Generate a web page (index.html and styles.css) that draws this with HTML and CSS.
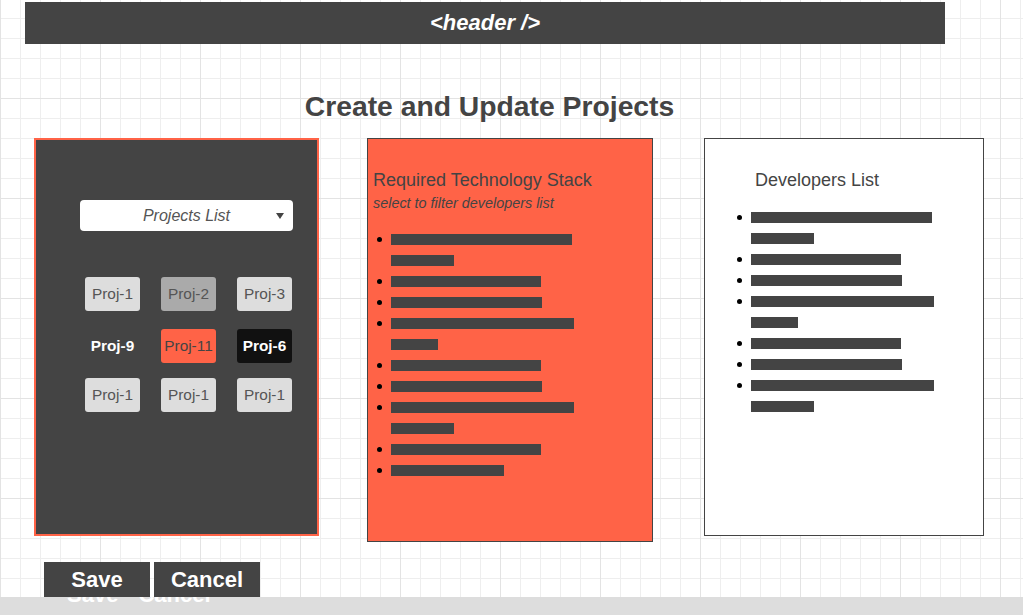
FILE: index.html
```html
<!DOCTYPE html>
<html>
<head>
<meta charset="utf-8">
<title>Create and Update Projects</title>
<link rel="stylesheet" href="styles.css">
</head>
<body>
  <header class="topbar">&lt;header /&gt;</header>
  <h1 class="page-title">Create and Update Projects</h1>

  <main class="panels">
    <section class="panel panel-projects">
      <div class="dropdown">
        <span class="dropdown-label">Projects List</span>
        <span class="dropdown-caret"></span>
      </div>
      <div class="proj-grid">
        <div class="proj-row">
          <button class="proj">Proj-1</button>
          <button class="proj proj-muted">Proj-2</button>
          <button class="proj">Proj-3</button>
        </div>
        <div class="proj-row proj-row-mid">
          <button class="proj proj-plain">Proj-9</button>
          <button class="proj proj-accent">Proj-11</button>
          <button class="proj proj-dark">Proj-6</button>
        </div>
        <div class="proj-row proj-row-last">
          <button class="proj">Proj-1</button>
          <button class="proj">Proj-1</button>
          <button class="proj">Proj-1</button>
        </div>
      </div>
    </section>

    <section class="panel panel-stack">
      <h2 class="panel-title">Required Technology Stack</h2>
      <p class="panel-sub">select to filter developers list</p>
      <ul class="bar-list">
        <li><div class="bars"><span class="bar" style="width:181px"></span><span class="bar" style="width:63px"></span></div></li>
        <li><div class="bars"><span class="bar" style="width:150px"></span></div></li>
        <li><div class="bars"><span class="bar" style="width:151px"></span></div></li>
        <li><div class="bars"><span class="bar" style="width:183px"></span><span class="bar" style="width:47px"></span></div></li>
        <li><div class="bars"><span class="bar" style="width:150px"></span></div></li>
        <li><div class="bars"><span class="bar" style="width:151px"></span></div></li>
        <li><div class="bars"><span class="bar" style="width:183px"></span><span class="bar" style="width:63px"></span></div></li>
        <li><div class="bars"><span class="bar" style="width:150px"></span></div></li>
        <li><div class="bars"><span class="bar" style="width:113px"></span></div></li>
      </ul>
    </section>

    <section class="panel panel-devs">
      <h2 class="panel-title">Developers List</h2>
      <ul class="bar-list">
        <li><div class="bars"><span class="bar" style="width:181px"></span><span class="bar" style="width:63px"></span></div></li>
        <li><div class="bars"><span class="bar" style="width:150px"></span></div></li>
        <li><div class="bars"><span class="bar" style="width:151px"></span></div></li>
        <li><div class="bars"><span class="bar" style="width:183px"></span><span class="bar" style="width:47px"></span></div></li>
        <li><div class="bars"><span class="bar" style="width:150px"></span></div></li>
        <li><div class="bars"><span class="bar" style="width:151px"></span></div></li>
        <li><div class="bars"><span class="bar" style="width:183px"></span><span class="bar" style="width:63px"></span></div></li>
      </ul>
    </section>
  </main>

  <div class="actions">
    <button class="action">Save</button>
    <button class="action">Cancel</button>
  </div>

  <footer class="bottom-bar">
    <div class="ghost"><span class="ghost-save">Save</span><span class="ghost-cancel">Cancel</span></div>
  </footer>
</body>
</html>
```

FILE: styles.css
```css
html {
  background-color: #ffffff;
  background-image:
    linear-gradient(to right, #e3e3e3 1px, transparent 1px),
    linear-gradient(to bottom, #e3e3e3 1px, transparent 1px),
    linear-gradient(to right, #eeeeee 1px, transparent 1px),
    linear-gradient(to bottom, #eeeeee 1px, transparent 1px);
  background-size: 100px 100px, 100px 100px, 20px 20px, 20px 20px;
  background-position: 0 -2px, 0 -2px, 0 -2px, 0 -2px;
}

body {
  margin: 0;
  font-family: "Liberation Sans", Arial, sans-serif;
  color: #444444;
  height: 615px;
  overflow: hidden;
}

.topbar {
  display: block;
  margin: 2px 0 0 25px;
  width: 920px;
  height: 42px;
  background: #444444;
  color: #ffffff;
  font-size: 22px;
  font-weight: bold;
  font-style: italic;
  line-height: 42px;
  text-align: center;
}

.page-title {
  margin: 46px 44px 16px 0;
  font-size: 28.3px;
  line-height: 32px;
  font-weight: bold;
  text-align: center;
  color: #444444;
}

.panels {
  display: flex;
  align-items: flex-start;
  padding-left: 34px;
}

.panel {
  box-sizing: border-box;
}

.panel-projects {
  width: 285px;
  height: 398px;
  background: #444444;
  border: 2px solid #ff6347;
  padding: 60px 0 0 44px;
}

.dropdown {
  position: relative;
  width: 213px;
  height: 31px;
  background: #ffffff;
  border-radius: 4px;
  text-align: center;
}

.dropdown-label {
  font-size: 16px;
  font-style: italic;
  line-height: 31px;
  color: #555555;
}

.dropdown-caret {
  position: absolute;
  right: 9px;
  top: 13px;
  width: 0;
  height: 0;
  border-left: 4px solid transparent;
  border-right: 4px solid transparent;
  border-top: 6px solid #444444;
}

.proj-grid {
  margin: 46px 0 0 5px;
}

.proj-row {
  display: flex;
  gap: 21px;
}

.proj-row-mid {
  margin-top: 18px;
}

.proj-row-last {
  margin-top: 15px;
}

.proj {
  width: 55px;
  height: 34px;
  padding: 0;
  border: none;
  border-radius: 3px;
  background: #dddddd;
  color: #555555;
  font-family: "Liberation Sans", Arial, sans-serif;
  font-size: 15.4px;
  line-height: 34px;
  text-align: center;
}

.proj-muted {
  background: #aaaaaa;
  color: #555555;
}

.proj-plain {
  background: transparent;
  color: #ffffff;
  font-weight: bold;
}

.proj-accent {
  background: #ff6347;
  color: #444444;
}

.proj-dark {
  background: #111111;
  color: #ffffff;
  font-weight: bold;
}

.panel-stack {
  margin-left: 48px;
  width: 286px;
  height: 404px;
  background: #ff6347;
  border: 1px solid #444444;
  padding: 31px 0 0 5px;
}

.panel-devs {
  margin-left: 51px;
  width: 280px;
  height: 398px;
  background: #ffffff;
  border: 1px solid #444444;
  padding: 31px 0 0 50px;
}

.panel-title {
  margin: 0;
  font-size: 18px;
  line-height: 21px;
  font-weight: normal;
  color: #444444;
}

.panel-sub {
  margin: 4px 0 0;
  font-size: 14.4px;
  line-height: 17px;
  font-style: italic;
  color: #444444;
}

.bar-list {
  list-style: none;
  margin: 17px 0 0;
  padding: 0 0 0 4px;
}

.panel-devs .bar-list {
  margin-top: 16px;
  padding-left: 0;
  margin-left: -18px;
}

.bar-list li {
  display: flex;
  align-items: flex-start;
}

.bar-list li::before {
  content: "";
  flex: none;
  width: 5px;
  height: 5px;
  margin: 8px 9px 0 0;
  border-radius: 50%;
  background: #000000;
}

.bars {
  display: flex;
  flex-direction: column;
}

.bar {
  display: block;
  height: 11px;
  margin: 5px 0;
  background: #444444;
}

.actions {
  display: flex;
  gap: 4px;
  margin-top: 20px;
  padding-left: 44px;
}

.action {
  width: 106px;
  height: 35px;
  padding: 0;
  border: none;
  background: #444444;
  color: #ffffff;
  font-family: "Liberation Sans", Arial, sans-serif;
  font-size: 22px;
  font-weight: bold;
  line-height: 35px;
  text-align: center;
}

.bottom-bar {
  height: 18px;
  background: #dddddd;
  overflow: hidden;
}

.ghost {
  display: flex;
  margin-top: -15px;
  padding-left: 67px;
  color: #ffffff;
  font-size: 22px;
  font-weight: bold;
  line-height: 25px;
}

.ghost-cancel {
  margin-left: 20px;
}
```
